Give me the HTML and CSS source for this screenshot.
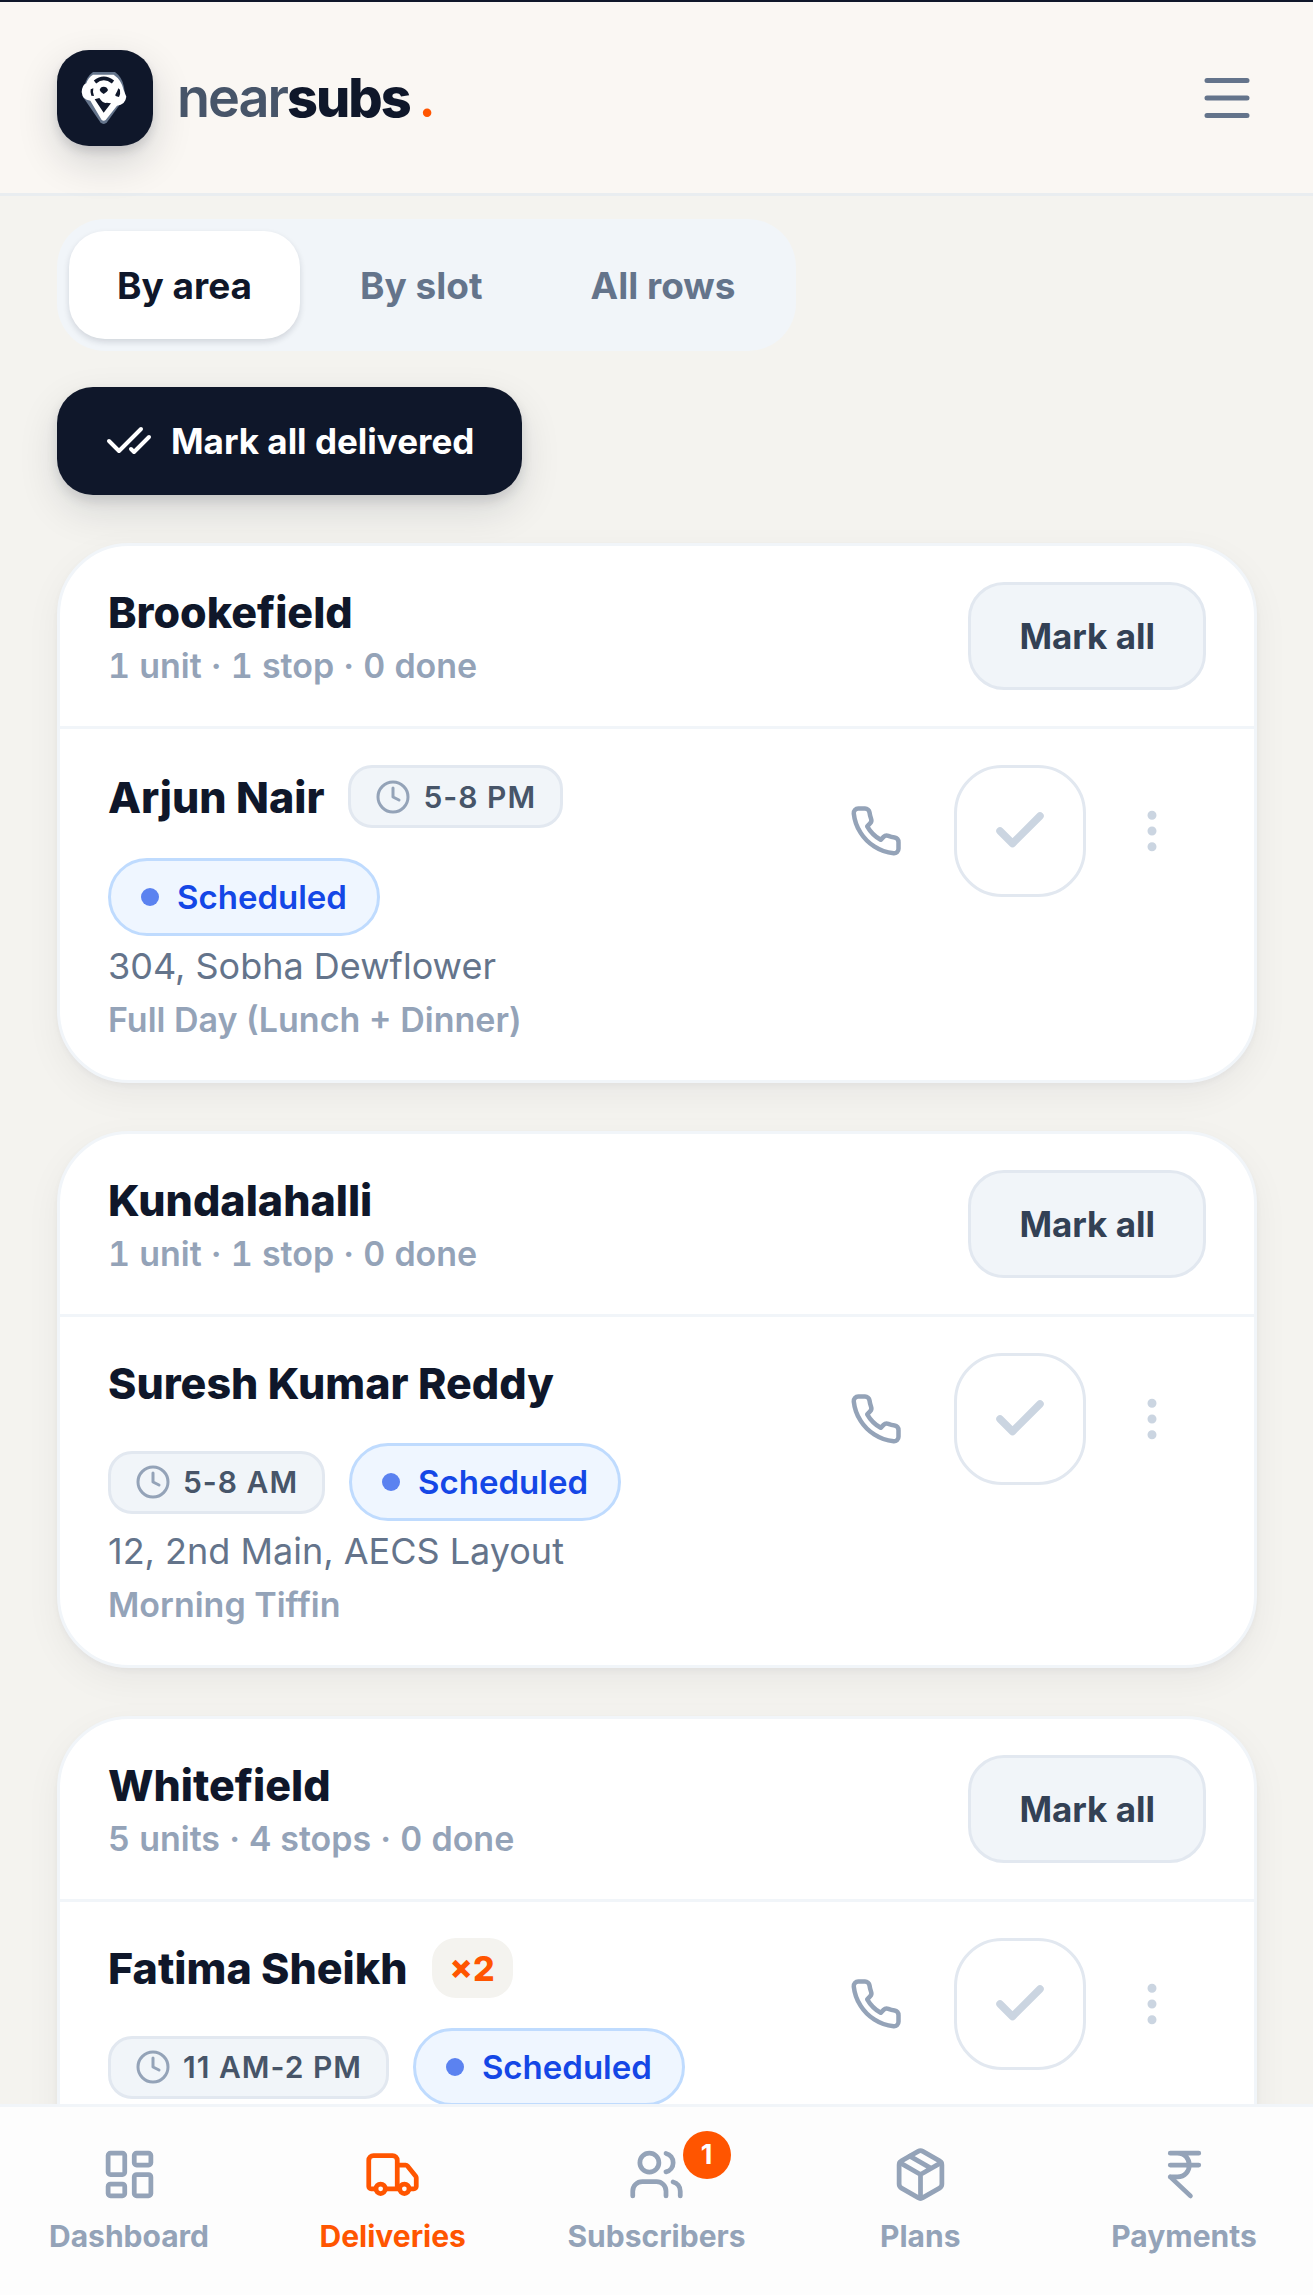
FILE: index.html
```html
<!DOCTYPE html>
<html lang="en">
<head>
    <meta charset="UTF-8">
    <meta name="viewport" content="width=device-width, initial-scale=1.0">
    <title>Deliveries - nearsubs</title>
    <link rel="stylesheet" href="styles.css">
</head>
<body>
    <!-- Shared icons -->
    <svg class="sprite" aria-hidden="true">
        <symbol id="icon-clock" viewBox="0 0 24 24">
            <circle cx="12" cy="12" r="10"/>
            <path d="M12 6v6l4 2"/>
        </symbol>
        <symbol id="icon-phone" viewBox="0 0 24 24">
            <path d="M22 16.92v3a2 2 0 0 1-2.18 2 19.79 19.79 0 0 1-8.63-3.07 19.5 19.5 0 0 1-6-6 19.79 19.79 0 0 1-3.07-8.67A2 2 0 0 1 4.11 2h3a2 2 0 0 1 2 1.72 12.84 12.84 0 0 0 .7 2.81 2 2 0 0 1-.45 2.11L8.09 9.91a16 16 0 0 0 6 6l1.27-1.27a2 2 0 0 1 2.11-.45 12.84 12.84 0 0 0 2.81.7A2 2 0 0 1 22 16.92z"/>
        </symbol>
        <symbol id="icon-check" viewBox="0 0 24 24">
            <path d="M20 6 9 17l-5-5"/>
        </symbol>
        <symbol id="icon-more" viewBox="0 0 24 24">
            <circle cx="12" cy="12" r="1"/>
            <circle cx="12" cy="5" r="1"/>
            <circle cx="12" cy="19" r="1"/>
        </symbol>
    </svg>

    <header class="topbar">
        <a class="brand" href="#">
            <span class="brand-mark">
                <svg viewBox="0 0 216 216" aria-hidden="true">
                    <path class="pin-back" d="M72 30h66q22 16 27 45l4 30-55 76q-10 10-20 0L42 105l4-30q4-29 26-45z"/>
                    <path class="pin" d="M72 38h62q24 16 30 46l8 20q-3 24-28 27l-34 43q-6 5-12 0L64 116q-24-2-26-26 2-22 14-26 6-18 20-26z"/>
                    <path class="arc" d="M78 60q26-22 54 0"/>
                    <path class="cut" d="M92 84q2-10 12-10t13 10q-1 5-13 12-10-5-12-12z"/>
                    <path class="cut" d="M65 82l8-3q-3 11 2 23l-8-1q-4-9-2-19zM139 98q6-9 9-19l5 4q2 12-3 22l-8-2q-4-2-3-5zM77 112l14-4q12 18 22 14l13 2-22 28z"/>
                </svg>
            </span>
            <span class="brand-name"><span class="near">near</span><span class="subs">subs</span><span class="dot">.</span></span>
        </a>
        <button class="menu-btn" type="button" aria-label="Menu">
            <svg class="icon" viewBox="0 0 24 24"><path d="M4 5h16M4 12h16M4 19h16"/></svg>
        </button>
    </header>

    <main class="content">
        <div class="tabs">
            <button class="tab active" type="button">By area</button>
            <button class="tab" type="button">By slot</button>
            <button class="tab" type="button">All rows</button>
        </div>

        <button class="deliver-btn" type="button">
            <svg class="icon" viewBox="0 0 24 24"><path d="M18 6 7 17l-5-5"/><path d="m22 10-7.5 7.5L13 16"/></svg>
            Mark all delivered
        </button>

        <section class="card">
            <div class="card-head">
                <div>
                    <h2>Brookefield</h2>
                    <p class="summary">1 unit · 1 stop · 0 done</p>
                </div>
                <button class="mark-btn" type="button">Mark all</button>
            </div>
            <div class="stop">
                <div class="stop-info">
                    <div class="stop-line">
                        <h3>Arjun Nair</h3>
                        <span class="slot"><svg class="icon"><use href="#icon-clock"/></svg>5-8 PM</span>
                        <span class="status">Scheduled</span>
                    </div>
                    <p class="address">304, Sobha Dewflower</p>
                    <p class="plan">Full Day (Lunch + Dinner)</p>
                </div>
                <div class="actions">
                    <a class="call" href="#" aria-label="Call"><svg class="icon"><use href="#icon-phone"/></svg></a>
                    <button class="done" type="button" aria-label="Mark delivered"><svg class="icon"><use href="#icon-check"/></svg></button>
                    <button class="more" type="button" aria-label="More"><svg class="icon"><use href="#icon-more"/></svg></button>
                </div>
            </div>
        </section>

        <section class="card">
            <div class="card-head">
                <div>
                    <h2>Kundalahalli</h2>
                    <p class="summary">1 unit · 1 stop · 0 done</p>
                </div>
                <button class="mark-btn" type="button">Mark all</button>
            </div>
            <div class="stop">
                <div class="stop-info">
                    <div class="stop-line">
                        <h3>Suresh Kumar Reddy</h3>
                        <span class="slot"><svg class="icon"><use href="#icon-clock"/></svg>5-8 AM</span>
                        <span class="status">Scheduled</span>
                    </div>
                    <p class="address">12, 2nd Main, AECS Layout</p>
                    <p class="plan">Morning Tiffin</p>
                </div>
                <div class="actions">
                    <a class="call" href="#" aria-label="Call"><svg class="icon"><use href="#icon-phone"/></svg></a>
                    <button class="done" type="button" aria-label="Mark delivered"><svg class="icon"><use href="#icon-check"/></svg></button>
                    <button class="more" type="button" aria-label="More"><svg class="icon"><use href="#icon-more"/></svg></button>
                </div>
            </div>
        </section>

        <section class="card">
            <div class="card-head">
                <div>
                    <h2>Whitefield</h2>
                    <p class="summary">5 units · 4 stops · 0 done</p>
                </div>
                <button class="mark-btn" type="button">Mark all</button>
            </div>
            <div class="stop">
                <div class="stop-info">
                    <div class="stop-line">
                        <h3>Fatima Sheikh</h3>
                        <span class="qty">×2</span>
                        <span class="slot"><svg class="icon"><use href="#icon-clock"/></svg>11 AM-2 PM</span>
                        <span class="status">Scheduled</span>
                    </div>
                </div>
                <div class="actions">
                    <a class="call" href="#" aria-label="Call"><svg class="icon"><use href="#icon-phone"/></svg></a>
                    <button class="done" type="button" aria-label="Mark delivered"><svg class="icon"><use href="#icon-check"/></svg></button>
                    <button class="more" type="button" aria-label="More"><svg class="icon"><use href="#icon-more"/></svg></button>
                </div>
            </div>
        </section>
    </main>

    <nav class="bottom-nav">
        <a href="#">
            <svg class="icon" viewBox="0 0 24 24"><rect x="3" y="3" width="7" height="9" rx="1"/><rect x="14" y="3" width="7" height="5" rx="1"/><rect x="14" y="12" width="7" height="9" rx="1"/><rect x="3" y="16" width="7" height="5" rx="1"/></svg>
            Dashboard
        </a>
        <a class="active" href="#">
            <svg class="icon" viewBox="0 0 24 24"><path d="M14 18V6a2 2 0 0 0-2-2H4a2 2 0 0 0-2 2v11a1 1 0 0 0 1 1h2M15 18H9M19 18h2a1 1 0 0 0 1-1v-3.650a1 1 0 0 0-.22-.624l-3.480-4.350A1 1 0 0 0 17.520 8H14"/><circle cx="7" cy="18" r="2"/><circle cx="17" cy="18" r="2"/></svg>
            Deliveries
        </a>
        <a href="#">
            <span class="badge">1</span>
            <svg class="icon" viewBox="0 0 24 24"><path d="M16 21v-2a4 4 0 0 0-4-4H6a4 4 0 0 0-4 4v2"/><circle cx="9" cy="7" r="4"/><path d="M22 21v-2a4 4 0 0 0-3-3.870M16 3.130a4 4 0 0 1 0 7.750"/></svg>
            Subscribers
        </a>
        <a href="#">
            <svg class="icon" viewBox="0 0 24 24"><path d="M21 8a2 2 0 0 0-1-1.730l-7-4a2 2 0 0 0-2 0l-7 4A2 2 0 0 0 3 8v8a2 2 0 0 0 1 1.730l7 4a2 2 0 0 0 2 0l7-4A2 2 0 0 0 21 16z"/><path d="m3.300 7 8.700 5 8.700-5M12 22V12M7.500 4.270l9 5.150"/></svg>
            Plans
        </a>
        <a href="#">
            <svg class="icon" viewBox="0 0 24 24"><path d="M6 3h12M6 8h12M6 13l8.500 8M6 13h3c6.670 0 6.670-10 0-10"/></svg>
            Payments
        </a>
    </nav>
</body>
</html>
```

FILE: styles.css
```css
* {
    box-sizing: border-box;
}

body {
    margin: 0;
    font-family: Inter, "Liberation Sans", sans-serif;
    font-size: 36px;
    color: #0f172a;
    background-color: #f4f3ef;
    height: 100vh;
    overflow: hidden;
    display: flex;
    flex-direction: column;
}

h2,
h3,
p {
    margin: 0;
}

a {
    color: inherit;
    text-decoration: none;
}

button {
    font-family: inherit;
    font-size: 35px;
    font-weight: 700;
    border: none;
    padding: 0;
    background: none;
    cursor: pointer;
}

.sprite {
    display: none;
}

.icon {
    display: block;
    flex: none;
    width: 54px;
    height: 54px;
    fill: none;
    stroke: currentColor;
    stroke-width: 2;
    stroke-linecap: round;
    stroke-linejoin: round;
}

/* Header */
.topbar {
    flex: none;
    display: flex;
    justify-content: space-between;
    align-items: center;
    height: 196px;
    padding: 0 56px 0 57px;
    background-color: #faf7f3;
    border-top: 2px solid #0f172a;
    border-bottom: 3px solid #e9edf0;
}

.brand {
    display: flex;
    align-items: center;
    gap: 24px;
}

.brand-mark {
    display: flex;
    justify-content: center;
    align-items: center;
    width: 96px;
    height: 96px;
    border-radius: 32px;
    background-color: #0f172a;
    box-shadow: 0 16px 40px rgba(15, 23, 42, 0.16), 0 6px 10px rgba(15, 23, 42, 0.12);
}

.brand-mark svg {
    width: 72px;
    height: 72px;
    fill: none;
}

.brand-mark .pin-back {
    fill: #64748b;
}

.brand-mark .pin {
    fill: #fff;
}

.brand-mark .cut {
    fill: #0f172a;
}

.brand-mark .arc {
    stroke: #0f172a;
    stroke-width: 11;
}

.brand-name {
    font-size: 54px;
    font-weight: 800;
    letter-spacing: -2px;
}

.near {
    font-weight: 600;
    color: #475569;
}

.dot {
    margin-left: 9px;
    font-weight: 600;
    color: #ff5500;
}

.menu-btn {
    color: #64748b;
}

.menu-btn .icon {
    width: 60px;
    height: 60px;
}

/* Page content */
.content {
    flex: 1;
    min-height: 0;
    overflow: hidden;
    display: flex;
    flex-direction: column;
    align-items: flex-start;
    padding: 23px 56px 0 57px;
}

.tabs {
    flex: none;
    display: flex;
    gap: 12px;
    padding: 12px;
    margin-bottom: 36px;
    border-radius: 48px;
    background-color: #f1f5f9;
}

.tab {
    height: 108px;
    padding: 0 48px;
    border-radius: 36px;
    font-size: 37px;
    color: #64748b;
}

.tab.active {
    color: #0f172a;
    background-color: #fff;
    box-shadow: 0 3px 6px rgba(15, 23, 42, 0.14);
}

.deliver-btn {
    flex: none;
    display: flex;
    align-items: center;
    gap: 18px;
    height: 108px;
    padding: 0 48px;
    margin-bottom: 48px;
    border-radius: 36px;
    color: #fff;
    background-color: #0f172a;
    box-shadow: 0 16px 40px rgba(15, 23, 42, 0.12), 0 6px 12px rgba(15, 23, 42, 0.12);
}

.deliver-btn .icon {
    width: 48px;
    height: 48px;
}

/* Area cards */
.card {
    flex: none;
    width: 100%;
    margin-bottom: 48px;
    border: 3px solid #f1f5f9;
    border-radius: 72px;
    background-color: #fff;
    box-shadow: 0 3px 6px rgba(15, 23, 42, 0.04), 0 12px 36px rgba(15, 23, 42, 0.05);
}

.card:last-child {
    min-height: 537px;
}

.card-head {
    display: flex;
    justify-content: space-between;
    align-items: center;
    padding: 36px 48px;
    border-bottom: 3px solid #f1f5f9;
}

.card h2,
.card h3 {
    font-size: 43px;
    line-height: 60px;
    font-weight: 800;
}

.summary {
    font-size: 34px;
    line-height: 48px;
    font-weight: 600;
    font-variant-numeric: tabular-nums;
    color: #94a3b8;
}

.mark-btn {
    height: 108px;
    padding: 0 48px;
    border: 3px solid #e2e8f0;
    border-radius: 36px;
    color: #334155;
    background-color: #f1f5f9;
}

.stop {
    display: flex;
    gap: 36px;
    padding: 36px 48px;
}

.stop-info {
    flex: 1;
    min-width: 0;
}

.stop-line {
    display: flex;
    flex-wrap: wrap;
    align-items: center;
    gap: 30px 24px;
}

.slot,
.status,
.qty {
    display: flex;
    align-items: center;
    font-weight: 600;
}

.slot {
    gap: 12px;
    height: 63px;
    padding: 0 24px;
    border: 3px solid #e2e8f0;
    border-radius: 24px;
    font-size: 30px;
    letter-spacing: 1px;
    color: #475569;
    background-color: #f1f5f9;
}

.slot .icon {
    width: 36px;
    height: 36px;
    color: #94a3b8;
}

.status {
    gap: 18px;
    height: 78px;
    padding: 0 30px;
    border: 3px solid #bfdbfe;
    border-radius: 39px;
    font-size: 33px;
    color: #1447e6;
    background-color: #eff6ff;
}

.status::before {
    content: "";
    width: 18px;
    height: 18px;
    border-radius: 50%;
    background-color: #5b82f0;
}

.qty {
    height: 60px;
    padding: 0 18px;
    border-radius: 24px;
    font-size: 34px;
    font-weight: 800;
    color: #ff5500;
    background-color: #f4f3ef;
}

.address {
    line-height: 60px;
    color: #64748b;
}

.plan {
    font-size: 34px;
    line-height: 48px;
    font-weight: 600;
    color: #94a3b8;
}

.actions {
    display: flex;
    align-items: flex-start;
    gap: 12px;
}

.actions > * {
    display: flex;
    justify-content: center;
    align-items: center;
    width: 132px;
    height: 132px;
}

.call {
    color: #94a3b8;
}

.done {
    border: 3px solid #e2e8f0;
    border-radius: 48px;
    color: #cbd5e1;
}

.done .icon {
    width: 60px;
    height: 60px;
    stroke-width: 3;
}

.actions .more {
    width: 108px;
    color: #cbd5e1;
}

/* Bottom navigation */
.bottom-nav {
    flex: none;
    display: flex;
    justify-content: space-between;
    align-items: flex-start;
    height: 191px;
    padding: 39px 33px 0;
    border-top: 3px solid #f1f5f9;
    background-color: #fdfdfd;
}

.bottom-nav a {
    position: relative;
    display: flex;
    flex-direction: column;
    align-items: center;
    gap: 12px;
    width: 192px;
    font-size: 30px;
    line-height: 42px;
    font-weight: 700;
    color: #94a3b8;
}

.bottom-nav .icon {
    width: 57px;
    height: 57px;
}

.bottom-nav .active {
    color: #ff5500;
}

.badge {
    position: absolute;
    top: -15px;
    right: 22px;
    width: 48px;
    height: 48px;
    border-radius: 50%;
    font-size: 27px;
    line-height: 48px;
    font-weight: 700;
    text-align: center;
    color: #fff;
    background-color: #ff5500;
}
```
